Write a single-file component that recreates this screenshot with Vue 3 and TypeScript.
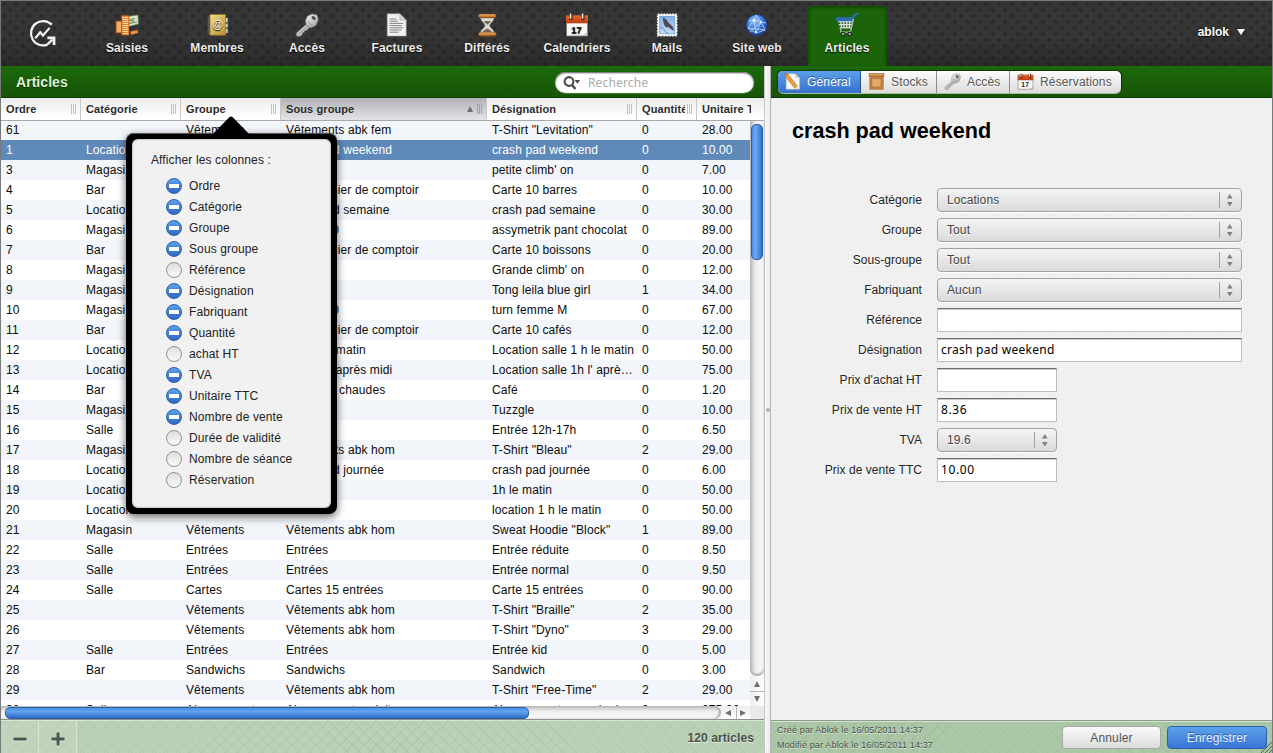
<script setup lang="ts">
import { ref, computed } from 'vue'

interface Row {
  n: string
  cat: string
  grp: string
  sub: string
  name: string
  qty: string
  price: string
}

const nav = ['Saisies', 'Membres', 'Accès', 'Factures', 'Différés', 'Calendriers', 'Mails', 'Site web', 'Articles']
const activeNav = ref('Articles')

const tabs = [
  { label: 'Général', cls: 'general' },
  { label: 'Stocks', cls: 'stocks' },
  { label: 'Accès', cls: 'acces' },
  { label: 'Réservations', cls: 'resa' },
]
const activeTab = ref('Général')

const headers = [
  { label: 'Ordre', cls: 'c-n' },
  { label: 'Catégorie', cls: 'c-cat' },
  { label: 'Groupe', cls: 'c-grp' },
  { label: 'Sous groupe', cls: 'c-sub' },
  { label: 'Désignation', cls: 'c-name' },
  { label: 'Quantité', cls: 'c-qty' },
  { label: 'Unitaire TTC', cls: 'c-price' },
]

const raw: string[][] = [
  ['61', '', 'Vêtements', 'Vêtements abk fem', 'T-Shirt "Levitation"', '0', '28.00'],
  ['1', 'Locations', '', 'crash pad weekend', 'crash pad weekend', '0', '10.00'],
  ['3', 'Magasin', '', '', "petite climb' on", '0', '7.00'],
  ['4', 'Bar', '', 'Bar - Panier de comptoir', 'Carte 10 barres', '0', '10.00'],
  ['5', 'Locations', '', 'crash pad semaine', 'crash pad semaine', '0', '30.00'],
  ['6', 'Magasin', '', 'Promo 20', 'assymetrik pant chocolat', '0', '89.00'],
  ['7', 'Bar', '', 'Bar - Panier de comptoir', 'Carte 10 boissons', '0', '20.00'],
  ['8', 'Magasin', '', '', "Grande climb' on", '0', '12.00'],
  ['9', 'Magasin', '', '', 'Tong leila blue girl', '1', '34.00'],
  ['10', 'Magasin', '', 'Promo 20', 'turn femme M', '0', '67.00'],
  ['11', 'Bar', '', 'Bar - Panier de comptoir', 'Carte 10 cafés', '0', '12.00'],
  ['12', 'Locations', '', 'Location matin', 'Location salle 1 h le matin', '0', '50.00'],
  ['13', 'Locations', '', 'Location après midi', "Location salle 1h l' après midi", '0', '75.00'],
  ['14', 'Bar', '', 'Boissons chaudes', 'Café', '0', '1.20'],
  ['15', 'Magasin', '', '', 'Tuzzgle', '0', '10.00'],
  ['16', 'Salle', '', '', 'Entrée 12h-17h', '0', '6.50'],
  ['17', 'Magasin', '', 'Vêtements abk hom', 'T-Shirt "Bleau"', '2', '29.00'],
  ['18', 'Locations', '', 'crash pad journée', 'crash pad journée', '0', '6.00'],
  ['19', 'Locations', '', '', '1h le matin', '0', '50.00'],
  ['20', 'Locations', 'Location salle', '', 'location 1 h le matin', '0', '50.00'],
  ['21', 'Magasin', 'Vêtements', 'Vêtements abk hom', 'Sweat Hoodie "Block"', '1', '89.00'],
  ['22', 'Salle', 'Entrées', 'Entrées', 'Entrée réduite', '0', '8.50'],
  ['23', 'Salle', 'Entrées', 'Entrées', 'Entrée normal', '0', '9.50'],
  ['24', 'Salle', 'Cartes', 'Cartes 15 entrées', 'Carte 15 entrées', '0', '90.00'],
  ['25', '', 'Vêtements', 'Vêtements abk hom', 'T-Shirt "Braille"', '2', '35.00'],
  ['26', '', 'Vêtements', 'Vêtements abk hom', 'T-Shirt "Dyno"', '3', '29.00'],
  ['27', 'Salle', 'Entrées', 'Entrées', 'Entrée kid', '0', '5.00'],
  ['28', 'Bar', 'Sandwichs', 'Sandwichs', 'Sandwich', '0', '3.00'],
  ['29', '', 'Vêtements', 'Vêtements abk hom', 'T-Shirt "Free-Time"', '2', '29.00'],
  ['30', 'Salle', 'Abonnements', 'Abonnements adulte', 'Abonnement annuel adulte', '0', '275.00'],
]
const rows = computed<Row[]>(() =>
  raw.map(([n, cat, grp, sub, name, qty, price]) => ({ n, cat, grp, sub, name, qty, price })),
)
const selected = ref('1')

const columns = ref([
  { label: 'Ordre', on: true },
  { label: 'Catégorie', on: true },
  { label: 'Groupe', on: true },
  { label: 'Sous groupe', on: true },
  { label: 'Référence', on: false },
  { label: 'Désignation', on: true },
  { label: 'Fabriquant', on: true },
  { label: 'Quantité', on: true },
  { label: 'achat HT', on: false },
  { label: 'TVA', on: true },
  { label: 'Unitaire TTC', on: true },
  { label: 'Nombre de vente', on: true },
  { label: 'Durée de validité', on: false },
  { label: 'Nombre de séance', on: false },
  { label: 'Réservation', on: false },
])

const fields = [
  { label: 'Catégorie', kind: 'select', value: 'Locations', small: false },
  { label: 'Groupe', kind: 'select', value: 'Tout', small: false },
  { label: 'Sous-groupe', kind: 'select', value: 'Tout', small: false },
  { label: 'Fabriquant', kind: 'select', value: 'Aucun', small: false },
  { label: 'Référence', kind: 'text', value: '', small: false },
  { label: 'Désignation', kind: 'text', value: 'crash pad weekend', small: false },
  { label: "Prix d'achat HT", kind: 'text', value: '', small: true },
  { label: 'Prix de vente HT', kind: 'text', value: '8.36', small: true },
  { label: 'TVA', kind: 'select', value: '19.6', small: true },
  { label: 'Prix de vente TTC', kind: 'text', value: '10.00', small: true },
]
</script>

<template>
  <div class="app">
    <svg class="defs" width="0" height="0">
      <defs>
        <linearGradient id="gold" x1="0" y1="0" x2="1" y2="1"><stop offset="0" stop-color="#f0dc8c" /><stop offset="1" stop-color="#b8922e" /></linearGradient>
        <linearGradient id="metal" x1="0" y1="0" x2="1" y2="1"><stop offset="0" stop-color="#f4f4f4" /><stop offset="1" stop-color="#9b9b9b" /></linearGradient>
        <linearGradient id="wood" x1="0" y1="0" x2="0" y2="1"><stop offset="0" stop-color="#f6b76c" /><stop offset="1" stop-color="#a2561c" /></linearGradient>
        <linearGradient id="sky" x1="0" y1="0" x2="0" y2="1"><stop offset="0" stop-color="#7eb0ea" /><stop offset="1" stop-color="#c5dcf5" /></linearGradient>
        <radialGradient id="globe" cx=".4" cy=".3" r=".75"><stop offset="0" stop-color="#9cc4ff" /><stop offset=".5" stop-color="#3b7ad6" /><stop offset="1" stop-color="#173f96" /></radialGradient>
        <linearGradient id="red" x1="0" y1="0" x2="0" y2="1"><stop offset="0" stop-color="#e8692c" /><stop offset="1" stop-color="#b93c12" /></linearGradient>
        <symbol id="i-key" viewBox="0 0 24 24">
          <path d="M12.2 10.5 1.2 20.2l.6 3 3.6.1 2-2 .1-1.7 1.8-.1.4-1.9 1.9-.2 3.6-3.9z" fill="url(#metal)" stroke="#77797a" stroke-width=".6" />
          <path d="M12.2 3.2 17 .9l5.1 1.2 1.2 4.5-2.2 5.6-5.3 2.6-4.4-2.4-.9-4.5z" fill="url(#metal)" stroke="#808284" stroke-width=".6" />
          <ellipse cx="18.6" cy="5" rx="2.3" ry="1.5" transform="rotate(40 18.6 5)" fill="#4a4a4a" />
          <path d="M3.5 21.2 13.5 12M12.7 8.5l4.4 4" stroke="#777" stroke-width=".8" fill="none" />
        </symbol>
        <symbol id="i-cal" viewBox="0 0 24 24">
          <path d="M1.5 3h21v20h-21z" fill="#f8f8f6" stroke="#7c7670" stroke-width=".8" />
          <path d="M1 2.5h22v7.8H1z" fill="url(#red)" />
          <path d="M6 1v6M18 1v6" stroke="#4c1b0b" stroke-width="3" />
          <path d="M5.6.5v5.3M17.6.5v5.3" stroke="#eee" stroke-width="1.5" />
          <text x="11.6" y="19.7" text-anchor="middle" class="caltext">17</text>
          <path d="M15 23c3-.2 5.5-1.7 7.5-4v4z" fill="#bbb" />
        </symbol>
      </defs>
    </svg>

    <header class="top">
      <div class="logo">
        <svg viewBox="0 0 30 30" width="30" height="30" fill="none" stroke="#f2f2f2">
          <path d="M24.8 6.6A12.2 12.2 0 1 0 20.6 26.6" stroke-width="2.2" />
          <path d="M8.2 20.2 13.2 14.2l2.8 3.3 6.6-7.6" stroke-width="2.2" />
          <path d="m20.4 26.4 5-4.8" stroke-width="2.3" />
          <path d="M20.4 18.6h8v8.4h-2.7v-5.7h-5.3z" fill="#f2f2f2" stroke="none" />
        </svg>
      </div>
      <nav class="nav">
        <a v-for="(item, i) in nav" :key="item" class="nav-item" :class="{ active: item === activeNav }" @click="activeNav = item">
          <svg viewBox="0 0 24 24" width="24" height="24">
            <g v-if="i === 0">
              <path d="m9 4 14-2 .4 9-12 3z" fill="#dce6cb" stroke="#6f8562" stroke-width=".7" />
              <path d="m13 7 7-1.5M12 11l10-2" stroke="#6f8562" />
              <ellipse cx="17" cy="7.5" rx="2.5" ry="2" fill="#92a982" />
              <path d="M1 8h7v12H1zM6.5 2.5h7.5v19.8H6.5z" fill="#e8822d" stroke="#9c4a14" stroke-width=".6" />
              <path d="M1.8 10h4.3M1.8 12h4.3M1.8 14h4.3M1.8 16h4.3M1.8 18h4.3M7.3 4.5h6M7.3 6.5h6M7.3 8.5h6M7.3 10.5h6M7.3 12.5h6M7.3 14.5h6M7.3 16.5h6M7.3 18.5h6M7.3 20.5h6" stroke="#ffe2b4" stroke-width=".9" />
              <path d="M15.5 18.4 22.5 17l.7 3-7 1.8z" fill="#f39a45" stroke="#a44e15" stroke-width=".6" />
            </g>
            <g v-else-if="i === 1">
              <path d="M2.2 2h3v20.2h-3z" fill="#55574f" stroke="#282a26" stroke-width=".6" />
              <path d="M5 1.5h15.5v20.7H5z" fill="url(#gold)" stroke="#967a2b" stroke-width=".7" />
              <path d="M20.6 5h2.2v4.2h-2.2zM20.6 10.4h2.2v4.2h-2.2zM20.6 15.8h2.2V20h-2.2z" fill="#d4d4cc" stroke="#77776c" stroke-width=".4" />
              <text x="12.6" y="15.4" text-anchor="middle" class="at">@</text>
            </g>
            <use v-else-if="i === 2" href="#i-key" />
            <g v-else-if="i === 3">
              <path d="M2.2.8h12.6l6.4 6.4v15.9h-19z" fill="#f1f1f0" stroke="#9c9c9c" stroke-width=".6" />
              <path d="M14.8.8v6.4h6.4z" fill="#cfcfcf" stroke="#aaa" stroke-width=".5" />
              <path d="M4.6 6h7M4.6 8.2h8.5M4.6 10.4h13.6M4.6 12.6h12M4.6 14.8h13.6M4.6 17h12M4.6 19.2h9" stroke="#777" stroke-width=".9" />
            </g>
            <g v-else-if="i === 4">
              <path d="M5.6 4.5c0 4 4.5 5.5 4.5 8.3 0 2.3-4.5 3.5-4.5 7h13.4c0-3.5-4.4-4.7-4.4-7 0-2.8 4.4-4.3 4.4-8.3z" fill="#dcdcd8" stroke="#999b97" stroke-width=".7" />
              <path d="M8.8 8h7.2c-.7 1.4-2.6 2.6-3.3 3.6h-.7c-.6-1-2.5-2.2-3.2-3.6zM7.8 19c.6-1.6 2.7-2.6 4.5-3.4 2 .8 3.8 1.8 4.5 3.4z" fill="#7b6654" />
              <rect x="3.4" y="1" width="17.8" height="3.9" rx="1.9" fill="url(#wood)" stroke="#803c0e" stroke-width=".5" />
              <rect x="3.4" y="19.3" width="17.8" height="3.9" rx="1.9" fill="url(#wood)" stroke="#803c0e" stroke-width=".5" />
            </g>
            <use v-else-if="i === 5" href="#i-cal" />
            <g v-else-if="i === 6">
              <path d="M2.7 1.3h19v21.5h-19z" fill="#fff" stroke="#fff" stroke-width="1.6" stroke-dasharray="1.6 1.3" />
              <path d="M4.7 3.3h15v17.5h-15z" fill="url(#sky)" stroke="#4a7cbf" stroke-width=".6" />
              <path d="M8 4.5c3 1 4.3 3 5.2 5l4.8 4.3.8 4.2-3.4-2.2-2-1.7-2.2.4C9 12.5 7.8 8.5 8 4.5z" fill="#514b4b" />
              <path d="M5 15c4-1.3 4 4 8 5.3" stroke="#5b89c4" fill="none" />
            </g>
            <g v-else-if="i === 7">
              <circle cx="11.7" cy="12" r="10.4" fill="url(#globe)" stroke="#173f91" stroke-width=".7" />
              <path d="M3 15 9 7l7 2 4 8-9 3zM9 7l2 13M3 15l17 2M4 8l5-1 2-5 5 7 5 1M16 9l-5 11M5 19l11-10" fill="none" stroke="#d7e8ff" stroke-width=".8" opacity=".85" />
              <path d="m9 5.7 1.2 1.6L9 9 7.7 7.3zM16 7.6l1 1.4-1 1.4-1-1.4zM11 17.6l1 1.4-1 1.4-1-1.4z" fill="#fff" />
            </g>
            <g v-else>
              <path d="M1.8 5h16.6l-2.2 10H4.9z" fill="#2d6142" />
              <path d="M3 8.6h14.6M3.8 11.6h13M4.8 14.8h11.8M5.4 6l1.2 9M8.5 6l.8 9M11.8 6v9M15 6l-.7 9" stroke="#dfe3d8" stroke-width="1.3" />
              <path d="M1.6 5.2h15.6V7.2H2.2zM17 6l2.6-4.4 3-.8" stroke="#2a6fb5" stroke-width="2" fill="#3d82c6" stroke-linejoin="round" stroke-linecap="round" />
              <path d="m18.4 6-2.6 11.6-1.5 1.6H6l-.8-3.8" fill="none" stroke="#b9beb6" stroke-width="1.3" />
              <circle cx="8" cy="21" r="2.3" fill="#272b27" /><circle cx="14.6" cy="21" r="2.3" fill="#272b27" />
              <circle cx="8" cy="21" r="1" fill="#d5d5d5" /><circle cx="14.6" cy="21" r="1" fill="#d5d5d5" />
            </g>
          </svg>
          <span>{{ item }}</span>
        </a>
      </nav>
      <div class="user"><span>ablok</span><i class="caret"></i></div>
    </header>

    <main class="main">
      <section class="left">
        <div class="greenbar">
          <h2>Articles</h2>
          <div class="search">
            <svg viewBox="0 0 20 16" width="20" height="16">
              <circle cx="7" cy="6.5" r="4.4" fill="none" stroke="#4c4c4c" stroke-width="2.1" />
              <path d="m10 10 3.5 4" stroke="#4c4c4c" stroke-width="2.5" />
              <path d="M12.6 5h5.6l-2.8 3.8z" fill="#4c4c4c" />
            </svg>
            <span>Recherche</span>
          </div>
        </div>
        <div class="thead">
          <div v-for="h in headers" :key="h.label" class="th" :class="h.cls">
            <b>{{ h.label }}</b>
            <i v-if="h.cls === 'c-sub'" class="sort"></i>
            <i v-if="h.cls !== 'c-price'" class="grip"></i>
          </div>
        </div>
        <div class="tbody">
          <div class="rows">
            <div v-for="r in rows" :key="r.n" class="tr" :class="{ selected: r.n === selected }" @click="selected = r.n">
              <span class="c-n">{{ r.n }}</span>
              <span class="c-cat">{{ r.cat }}</span>
              <span class="c-grp">{{ r.grp }}</span>
              <span class="c-sub">{{ r.sub }}</span>
              <span class="c-name">{{ r.name }}</span>
              <span class="c-qty">{{ r.qty }}</span>
              <span class="c-price">{{ r.price }}</span>
            </div>
          </div>
          <div class="vscroll">
            <div class="vtrack"><div class="vthumb"></div></div>
            <div class="arrow"><i class="up"></i></div>
            <div class="arrow line"><i class="down"></i></div>
          </div>
        </div>
        <div class="hscroll">
          <div class="htrack"><div class="hthumb"></div></div>
          <div class="harrow"><i class="lft"></i></div>
          <div class="harrow line"><i class="rgt"></i></div>
          <div class="corner"></div>
        </div>
        <footer class="foot">
          <button class="tool"><svg viewBox="0 0 14 14" width="14" height="14"><path d="M.5 5.6h13v2.9H.5z" fill="#47584e" /></svg></button>
          <button class="tool"><svg viewBox="0 0 14 14" width="14" height="14"><path d="M5.6.5h2.9v5.1h5v2.9h-5v5H5.6v-5H.5V5.6h5.1z" fill="#47584e" /></svg></button>
          <span class="count">120 articles</span>
        </footer>
      </section>

      <div class="splitter"><i></i></div>

      <section class="right">
        <div class="greenbar rbar">
          <div class="tabs">
            <a v-for="t in tabs" :key="t.label" class="tab" :class="[t.cls, { on: t.label === activeTab }]" @click="activeTab = t.label">
              <svg viewBox="0 0 24 24" width="17" height="17">
                <g v-if="t.cls === 'general'">
                  <path d="M3 1h13l6 6v16H3z" fill="#f8f8f6" stroke="#b0b0b0" stroke-width=".7" />
                  <path d="M16 1v6h6z" fill="#ccc" />
                  <path d="m1.2 1 4.5.8 13 16.5-3.7 2.9L2 5z" fill="#eca03f" stroke="#a15f1e" stroke-width=".8" />
                  <path d="m1.2 1 4.5.8-3.5 3z" fill="#d66b5a" />
                  <path d="m18.7 18.3.8 4.2-4.5-1.3z" fill="#e8cda8" />
                </g>
                <g v-else-if="t.cls === 'stocks'">
                  <path d="M1.5.8h21v4h-21z" fill="#c9843f" stroke="#93571f" stroke-width=".8" />
                  <path d="M2.5 4.8h19V23h-19z" fill="#c98545" stroke="#93571f" stroke-width=".8" />
                  <path d="M5.5 7.5h13V20h-13z" fill="#dfa567" stroke="#a76a31" stroke-width="1" />
                  <path d="M2.4 2.5h19.2M6 11.5h12M6 15.8h12" stroke="#eab97e" stroke-width="1" />
                </g>
                <use v-else-if="t.cls === 'acces'" href="#i-key" />
                <use v-else href="#i-cal" />
              </svg>
              <span>{{ t.label }}</span>
            </a>
          </div>
        </div>
        <div class="panel">
          <h1>crash pad weekend</h1>
          <div class="form">
            <div v-for="f in fields" :key="f.label" class="field">
              <label>{{ f.label }}</label>
              <div v-if="f.kind === 'select'" class="select" :class="{ small: f.small }">
                <span>{{ f.value }}</span>
                <svg viewBox="0 0 22 18" width="22" height="18"><path d="M.5 1v16" stroke="#a0a0a0" /><path d="M8 7.5 10.8 3l2.8 4.5zM8 11h5.6l-2.8 4.5z" fill="#808080" /></svg>
              </div>
              <div v-else class="input" :class="{ small: f.small }">{{ f.value }}</div>
            </div>
          </div>
        </div>
        <footer class="foot rfoot">
          <div class="meta"><p>Créé par Ablok le 16/05/2011 14:37</p><p>Modifié par Ablok le 16/05/2011 14:37</p></div>
          <button class="btn">Annuler</button>
          <button class="btn primary">Enregistrer</button>
          <svg class="resize" viewBox="0 0 12 12" width="12" height="12"><path d="M1 12 12 1M5 12l7-7M9 12l3-3" stroke="#4f6650" fill="none" /></svg>
        </footer>
      </section>
    </main>

    <div class="popover">
      <svg class="tip" viewBox="0 0 40 20" width="40" height="20"><path d="M1 20 18 2.6q2-2 4 0L39 20z" fill="#000" /></svg>
      <div class="pop-in">
        <p>Afficher les colonnes :</p>
        <ul>
          <li v-for="c in columns" :key="c.label" @click="c.on = !c.on"><i class="dot" :class="{ on: c.on }"></i><span>{{ c.label }}</span></li>
        </ul>
      </div>
    </div>
  </div>
</template>

<style>
html, body { margin: 0; overflow: hidden; }
</style>

<style scoped>
* { box-sizing: border-box; }
.app {
  position: relative; width: 1273px; height: 753px; overflow: hidden;
  display: flex; flex-direction: column;
  border: 1px solid #767b79; border-bottom: 0;
  font: 12px/20px "Liberation Sans", Arial, sans-serif; color: #111; background: #eee;
}
.defs { position: absolute; }
.caltext { font: bold 9.5px "Liberation Sans", sans-serif; fill: #222; }
.at { font: bold 11px "Liberation Sans", sans-serif; fill: #fff8dc; }
p, h1, h2, ul { margin: 0; padding: 0; list-style: none; }

.top {
  height: 65px; flex: none; display: flex;
  background:
    linear-gradient(rgba(0,0,0,0) 55%, rgba(0,0,0,.2)),
    radial-gradient(ellipse 2.8px 2.2px at 3px 3px, #282828 40%, transparent) 0 0 / 12.6px 12px,
    radial-gradient(ellipse 2.8px 2.2px at 9.3px 9px, #282828 40%, transparent) 0 0 / 12.6px 12px,
    #353535;
}
.logo { width: 81px; padding: 17px 0 0 26px; }
.nav { display: flex; }
.nav-item {
  width: 79px; margin: 5px 5.5px 0; padding-top: 7px; height: 60px;
  display: flex; flex-direction: column; align-items: center;
  color: #ececec; font-weight: bold; text-shadow: 0 1px 1px #000; letter-spacing: .1px;
}
.nav-item svg { display: block; }
.nav-item span { line-height: 16px; margin-top: 3px; white-space: nowrap; }
.nav-item.active { background: #1b6409; border-radius: 5px 5px 0 0; box-shadow: inset 0 2px 3px #124e04, inset 2px 0 2px #17570a, inset -2px 0 2px #17570a; clip-path: inset(0); }
.user { margin-left: auto; padding: 21px 27px 0 0; display: flex; align-items: center; height: 41px; gap: 8px; color: #fff; font-weight: bold; text-shadow: 0 1px 1px #000; }
.caret { border: 4px solid transparent; border-top: 6px solid #fff; border-bottom: 0; }

.main { flex: 1; display: flex; min-height: 0; }
.left { width: 763px; display: flex; flex-direction: column; background: #fff; }
.greenbar {
  height: 32px; flex: none; display: flex; align-items: center; justify-content: space-between;
  padding: 0 10px 0 15px; background: linear-gradient(#1c6909, #175407); border-bottom: 1px solid #0f3a04;
}
h2 { font-size: 14px; color: #dfeedb; text-shadow: 0 1px 1px #0b3300; letter-spacing: .05px; }
.search {
  width: 199px; height: 21px; border-radius: 11px; background: #fff; margin-top: 2px;
  box-shadow: inset 0 1px 2px #555, 0 1px 0 #3b7f2a; display: flex; align-items: center; padding-left: 7px;
  color: #aaa; font: 12px/20px "Noto Sans", sans-serif; letter-spacing: .15px;
}
.search span { margin-left: 6px; }

.thead { height: 23px; flex: none; display: flex; border-bottom: 1px solid #a8a8a8; background: linear-gradient(#ececec, #fff 90%); }
.th { position: relative; display: flex; align-items: center; padding-left: 5px; border-right: 1px solid #c8c8c8; }
.th b { font-size: 11px; line-height: 22px; color: #2b2b2b; white-space: nowrap; overflow: hidden; letter-spacing: .1px; flex: 1; text-shadow: 0 1px 0 #fff; }
.th.c-sub { background: linear-gradient(#b0b1b6, #e4e4e8); }
.th.c-sub b { text-shadow: 0 1px 0 #ddd; }
.th.c-sub .grip { background: repeating-linear-gradient(90deg, #9fa0a4 0 1px, transparent 1px 2px); }
.th.c-qty b { flex: none; width: 43px; margin-right: 2px; }
.th.c-price { border-right: 0; }
.th.c-price b { flex: none; width: 49px; }
.grip { flex: none; width: 5px; height: 10px; margin-right: 4px; background: repeating-linear-gradient(90deg, #c2c2c2 0 1px, transparent 1px 2px); }
.sort { border: 3.5px solid transparent; border-bottom: 6px solid #707074; border-top: 0; margin-right: 4px; }
.c-n { width: 80px; }
.c-cat, .c-grp { width: 100px; }
.c-sub { width: 206px; }
.c-name { width: 150px; }
.c-qty { width: 60px; }
.c-price { width: 53px; }
.th.c-price { width: 67px; }
.c-n, .c-cat, .c-grp, .c-sub, .c-name, .c-qty, .c-price { flex: none; }

.tbody { height: 585px; flex: none; display: flex; overflow: hidden; }
.rows { width: 749px; height: 586px; margin-top: -1px; overflow: hidden; }
.tr { display: flex; height: 20px; background: #fff; letter-spacing: .12px; color: #0c0c0c; }
.tr:nth-child(odd) { background: #f2f5fa; }
.tr.selected { background: #5f89b9; color: #fff; }
.tr span { padding-left: 5px; overflow: hidden; white-space: nowrap; text-overflow: ellipsis; }
.tr .c-name { padding-right: 2px; }

.vscroll { width: 14px; display: flex; flex-direction: column; background: #f4f4f4; }
.vtrack { flex: 1; padding: 3px 1px 0; border-radius: 0 0 7px 7px; background: linear-gradient(90deg, #b9b9b9, #ededed 40%, #fafafa); box-shadow: inset 0 -2px 2px #aaa; }
.vthumb { height: 136px; border-radius: 5px; border: 1px solid #2b5fa8; background: linear-gradient(90deg, #4d90e2, #6aaaf3 35%, #2d70c8); }
.arrow { height: 15px; display: flex; align-items: center; justify-content: center; background: linear-gradient(90deg, #eee, #fff); }
.arrow.line { border-top: 1px solid #b5b5b5; }
.up, .down, .lft, .rgt { border: 3.5px solid transparent; }
.up { border-bottom: 6px solid #707070; border-top: 0; }
.down { border-top: 6px solid #707070; border-bottom: 0; }
.lft { border-right: 6px solid #707070; border-left: 0; }
.rgt { border-left: 6px solid #707070; border-right: 0; }
.hscroll { height: 14px; flex: none; display: flex; background: #f2f2f2; border-bottom: 1px solid #8e8e8e; }
.htrack { width: 720px; padding: 1px 0 0 4px; border-radius: 0 7px 7px 0; background: linear-gradient(#b9b9b9, #ededed 40%, #fafafa); box-shadow: inset -2px 0 2px #aaa; }
.hthumb { width: 524px; height: 12px; border-radius: 5px; border: 1px solid #2b5fa8; background: linear-gradient(#4d90e2, #62a3ef 35%, #2d6cc2); }
.harrow { width: 14.5px; display: flex; align-items: center; justify-content: center; background: linear-gradient(#eee, #fff); }
.harrow.line { border-left: 1px solid #b5b5b5; }
.corner { flex: 1; background: #e9e9e9; }

.foot {
  flex: 1; display: flex; border-top: 1px solid #d9e6d5;
  background:
    repeating-linear-gradient(45deg, rgba(80,110,80,.075) 0 1px, transparent 1px 8.5px),
    repeating-linear-gradient(-45deg, rgba(80,110,80,.075) 0 1px, transparent 1px 8.5px),
    #b9d1b5;
}
.tool { width: 38px; border: 0; border-right: 1px solid #d8e5d5; background: rgba(255,255,255,.1); padding: 2px 0 0; display: flex; align-items: center; justify-content: center; }
.tool svg { filter: drop-shadow(0 1px 0 #dfeadc); }
.count { margin-left: auto; padding-right: 10px; line-height: 34px; font-weight: bold; color: #4a4f4c; text-shadow: 0 1px 0 #e4efe1; letter-spacing: .1px; }

.splitter { width: 7px; flex: none; display: flex; align-items: center; justify-content: center; background: linear-gradient(90deg, #f8f8f8, #ececec); border-left: 1px solid #c4c4c4; border-right: 1px solid #b4b4b4; }
.splitter i { width: 4px; height: 4px; border-radius: 2px; background: #b0b0b0; }

.right { flex: 1; display: flex; flex-direction: column; min-width: 0; }
.rbar { padding: 0 0 0 7px; justify-content: flex-start; }
.tabs { display: flex; height: 22px; border-radius: 5px; overflow: hidden; background: linear-gradient(#fbfbfb, #dcdcdc); box-shadow: 0 1px 0 #a3c09c, 0 0 1px 1px #0d3b03; }
.tab { display: flex; align-items: center; border-right: 1px solid #8b8b8b; color: #555; letter-spacing: .15px; padding-left: 7px; text-shadow: 0 1px 0 #fff; }
.tab span { margin-left: 6px; line-height: 22px; }
.general { width: 83px; padding-left: 6px; }
.stocks { width: 76px; }
.acces { width: 73px; }
.resa { width: 111px; border-right: 0; }
.tab.on { background: linear-gradient(#5ba0e9, #3670cd); color: #fff; text-shadow: 0 -1px 0 #28559b; border-right-color: #244f90; }

.panel {
  height: 622px; flex: none; overflow: hidden;
  background:
    repeating-linear-gradient(90deg, rgba(0,0,0,.012) 0 1px, transparent 1px 4px, rgba(0,0,0,.008) 4px 5px, transparent 5px 7px),
    repeating-linear-gradient(rgba(0,0,0,.012) 0 1px, transparent 1px 5px, rgba(0,0,0,.008) 5px 6px, transparent 6px 8px),
    #f1f1f1;
}
h1 { font-size: 21.6px; line-height: 26px; color: #000; padding: 20px 0 0 21px; }
.form { padding-top: 41px; }
.field { height: 30px; padding: 3px 0; display: flex; }
label { width: 151px; text-align: right; line-height: 24px; color: #222; letter-spacing: .05px; text-shadow: 0 1px 0 #fff; margin-right: 15px; }
.select { width: 305px; height: 24px; border: 1px solid #a2a2a2; border-radius: 4px; background: linear-gradient(#f4f4f4, #dadada); display: flex; justify-content: space-between; align-items: center; padding-left: 9px; color: #444; letter-spacing: .1px; text-shadow: 0 1px 0 #fff; box-shadow: 0 1px 0 #fff; }
.input { width: 305px; height: 24px; background: #fff; border: 1px solid #bdbdbd; border-top-color: #6f6f6f; box-shadow: inset 0 1px 0 #c9c9c9; padding-left: 3px; font: 12px/21px "Noto Sans", sans-serif; letter-spacing: .27px; color: #000; }
.small { width: 120px; }
.input.small { letter-spacing: .6px; }

.rfoot { border-top-color: #8e9a8c; padding: 6px 5px 0 6px; position: relative; background-color: #abc7a7; box-shadow: inset 0 1px 0 #d5e3d2; }
.meta { flex: 1; font-size: 9px; color: #47504a; text-shadow: 0 1px 0 #dbe8d8; margin-top: -4px; letter-spacing: .15px; }
.meta p { line-height: 15px; }
.btn { width: 99px; height: 23px; border: 1px solid #a9a9a9; border-radius: 4px; background: linear-gradient(#fafafa, #dcdcdc); font: 12px/20px "Liberation Sans", Arial, sans-serif; color: #555; letter-spacing: .15px; padding: 0; margin-top: -1px; }
.btn.primary { width: 100px; margin-left: 6px; background: linear-gradient(#5ba2ea, #3a74d6); border-color: #2b60ae; color: #e8f1ff; text-shadow: 0 -1px 0 #2c5ea9; }
.resize { position: absolute; right: 0; bottom: 0; }

.popover { position: absolute; left: 125px; top: 132px; width: 211px; height: 381px; padding: 6px; border-radius: 8px; background: #000; box-shadow: 0 3px 8px rgba(0,0,0,.6), inset 0 1px 0 #555; }
.tip { position: absolute; left: 85px; top: -18px; }
.pop-in { height: 369px; border-radius: 6px; background: #f1f1f1; padding: 11px 0 0 19px; color: #222; letter-spacing: .12px; box-shadow: inset 0 0 2px #777; }
.pop-in ul { padding: 5px 0 0 15px; }
.pop-in li { height: 21px; line-height: 21px; display: flex; align-items: center; gap: 7px; }
.pop-in li span { padding-top: 1px; }
.dot { width: 16px; height: 16px; border-radius: 50%; border: 1px solid #929292; background: linear-gradient(#dedede, #fafafa); display: flex; align-items: center; justify-content: center; }
.dot.on { border-color: #2b60a8; background: linear-gradient(#5aa3ea, #3265c5); }
.dot.on::after { content: ""; width: 10px; height: 4px; background: #fff; box-shadow: 0 0 1px #1e4b90; }
</style>
